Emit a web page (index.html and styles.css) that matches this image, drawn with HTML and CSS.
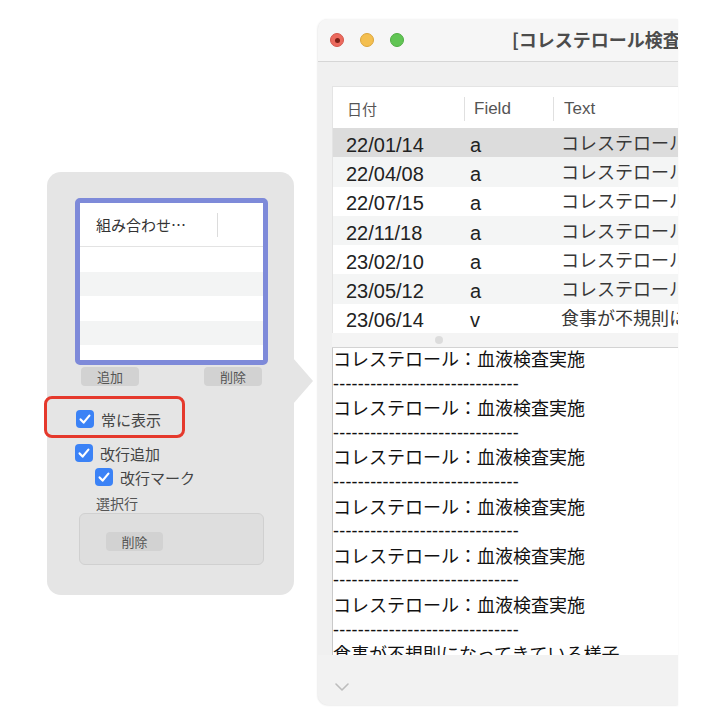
FILE: index.html
```html
<!DOCTYPE html>
<html lang="ja">
<head>
<meta charset="utf-8">
<title>Window</title>
<link rel="stylesheet" href="styles.css">
</head>
<body>
<div class="stage">
  <div class="popover">
    <div class="list">
      <div class="list-head"><span class="list-col">組み合わせ…</span><span class="list-sep"></span></div>
      <div class="list-row"></div>
      <div class="list-row alt"></div>
      <div class="list-row"></div>
      <div class="list-row alt"></div>
      <div class="list-row"></div>
    </div>
    <div class="btn-row"><span class="btn">追加</span><span class="btn">削除</span></div>
    <div class="check check-1"><span class="box"><svg viewBox="0 0 18 18" width="18" height="18"><path d="M4.6 9.4 L7.6 12.6 L13.4 5.6" fill="none" stroke="#fff" stroke-width="2.2" stroke-linecap="round" stroke-linejoin="round"/></svg></span><span>常に表示</span></div>
    <div class="check check-2"><span class="box"><svg viewBox="0 0 18 18" width="18" height="18"><path d="M4.6 9.4 L7.6 12.6 L13.4 5.6" fill="none" stroke="#fff" stroke-width="2.2" stroke-linecap="round" stroke-linejoin="round"/></svg></span><span>改行追加</span></div>
    <div class="check check-3"><span class="box"><svg viewBox="0 0 18 18" width="18" height="18"><path d="M4.6 9.4 L7.6 12.6 L13.4 5.6" fill="none" stroke="#fff" stroke-width="2.2" stroke-linecap="round" stroke-linejoin="round"/></svg></span><span>改行マーク</span></div>
    <div class="caption">選択行</div>
    <div class="group"><span class="btn">削除</span></div>
    <div class="highlight"></div>
  </div>

  <div class="window">
    <div class="titlebar">
      <div class="lights">
        <span class="light red"><span class="dot"></span></span>
        <span class="light yellow"></span>
        <span class="light green"></span>
      </div>
      <div class="title">[コレステロール検査結果]</div>
    </div>
    <div class="content">
      <div class="table">
        <div class="thead">
          <div class="th c1">日付</div>
          <div class="th c2">Field</div>
          <div class="th c3">Text</div>
        </div>
        <div class="tr selected"><div class="td c1">22/01/14</div><div class="td c2">a</div><div class="td c3 jp">コレステロール：血液検査実施</div></div>
        <div class="tr alt"><div class="td c1">22/04/08</div><div class="td c2">a</div><div class="td c3 jp">コレステロール：血液検査実施</div></div>
        <div class="tr"><div class="td c1">22/07/15</div><div class="td c2">a</div><div class="td c3 jp">コレステロール：血液検査実施</div></div>
        <div class="tr alt"><div class="td c1">22/11/18</div><div class="td c2">a</div><div class="td c3 jp">コレステロール：血液検査実施</div></div>
        <div class="tr"><div class="td c1">23/02/10</div><div class="td c2">a</div><div class="td c3 jp">コレステロール：血液検査実施</div></div>
        <div class="tr alt"><div class="td c1">23/05/12</div><div class="td c2">a</div><div class="td c3 jp">コレステロール：血液検査実施</div></div>
        <div class="tr"><div class="td c1">23/06/14</div><div class="td c2">v</div><div class="td c3 jp">食事が不規則になってきている様子</div></div>
      </div>
      <div class="splitter"><span class="grip"></span></div>
      <div class="textview">
        <div class="lines">
          <div class="line">コレステロール：血液検査実施</div>
          <div class="line dash">------------------------------</div>
          <div class="line">コレステロール：血液検査実施</div>
          <div class="line dash">------------------------------</div>
          <div class="line">コレステロール：血液検査実施</div>
          <div class="line dash">------------------------------</div>
          <div class="line">コレステロール：血液検査実施</div>
          <div class="line dash">------------------------------</div>
          <div class="line">コレステロール：血液検査実施</div>
          <div class="line dash">------------------------------</div>
          <div class="line">コレステロール：血液検査実施</div>
          <div class="line dash">------------------------------</div>
          <div class="line">食事が不規則になってきている様子</div>
        </div>
      </div>
    </div>
    <div class="bottombar">
      <svg class="chevron" viewBox="0 0 14 8" width="14" height="8"><polyline points="1,1 7,7 13,1" fill="none" stroke="#bdbdbd" stroke-width="1.6" stroke-linecap="round" stroke-linejoin="round"/></svg>
    </div>
  </div>
</div>
</body>
</html>
```

FILE: styles.css
```css
* { box-sizing: border-box; }

html, body {
  margin: 0;
  padding: 0;
  background: #ffffff;
}

body {
  font-family: "Liberation Sans", "Noto Sans CJK JP", sans-serif;
  color: #222;
}

.stage {
  display: flex;
  align-items: flex-start;
  gap: 24px;
  padding: 19px 0 0 47px;
  width: 712px;
  height: 728px;
  overflow: hidden;
}

/* ---------- popover ---------- */
.popover {
  position: relative;
  flex: none;
  width: 247px;
  height: 423px;
  margin-top: 153px;
  padding: 26px 0 0 28px;
  background: #e5e5e5;
  border-radius: 14px;
  font-family: "Noto Sans CJK JP", sans-serif;
  color: #444;
}

.popover::after {
  content: "";
  position: absolute;
  right: -19px;
  top: 186px;
  width: 20px;
  height: 46px;
  background: #e5e5e5;
  clip-path: polygon(0 0, 100% 50%, 0 100%);
}

.list {
  width: 193px;
  height: 167px;
  border: 5px solid #7e8ad9;
  border-radius: 5px;
  background: #fff;
  overflow: hidden;
}

.list-head {
  display: flex;
  align-items: center;
  height: 44px;
  border-bottom: 1px solid #e3e3e3;
  padding-left: 16px;
}

.list-col {
  width: 121px;
  font-size: 15px;
  line-height: 24px;
  color: #333;
  white-space: nowrap;
}

.list-sep {
  width: 1px;
  height: 24px;
  background: #dcdcdc;
}

.list-row {
  height: 24.5px;
  background: #fff;
}

.list-row.alt { background: #f3f4f4; }

.btn-row {
  display: flex;
  justify-content: space-between;
  width: 193px;
  margin-top: 2px;
  padding: 0 6px;
}

.btn {
  display: inline-flex;
  align-items: center;
  justify-content: center;
  width: 58px;
  height: 19px;
  background: #d2d2d2;
  border-radius: 4px;
  font-size: 13px;
  color: #555;
  line-height: 1;
}

.check {
  display: flex;
  align-items: center;
  gap: 7px;
  height: 18px;
  font-size: 15px;
  color: #444;
  white-space: nowrap;
}

.check-1 { margin-top: 24px; padding-left: 1px; }
.check-2 { margin-top: 16px; }
.check-3 { margin-top: 6px; padding-left: 20px; }

.box {
  display: inline-flex;
  width: 18px;
  height: 18px;
  background: #3b82f6;
  border-radius: 4px;
  flex: none;
}

.caption {
  margin-top: 8px;
  padding-left: 21px;
  font-size: 14px;
  line-height: 18px;
  color: #555;
}

.group {
  width: 185px;
  height: 52px;
  margin: 1px 0 0 4px;
  padding: 14px 0 0 26px;
  background: #dedede;
  border: 1px solid #d0d0d0;
  border-radius: 6px;
}

.group .btn { width: 57px; }

.highlight {
  position: absolute;
  left: -3px;
  top: 224px;
  width: 141px;
  height: 42px;
  border: 3px solid #e5392c;
  border-radius: 8px;
}

/* ---------- window ---------- */
.window {
  flex: none;
  width: 360px;
  height: 686px;
  display: flex;
  flex-direction: column;
  background: #f0f0f0;
  border-radius: 10px 0 0 10px;
  box-shadow: -1px 0 2px rgba(0,0,0,0.06), 0 1px 2px rgba(0,0,0,0.06);
  overflow: hidden;
}

.titlebar {
  flex: none;
  display: flex;
  align-items: center;
  height: 43px;
  background: #f6f6f6;
  border-bottom: 1px solid #d6d6d6;
  padding-left: 12px;
}

.lights {
  display: flex;
  gap: 16px;
}

.light {
  display: flex;
  align-items: center;
  justify-content: center;
  width: 14px;
  height: 14px;
  border-radius: 50%;
}

.light.red { background: #ec6a5e; border: 0.5px solid #d4574c; }
.light.yellow { background: #f4bf4f; border: 0.5px solid #dba53c; }
.light.green { background: #61c554; border: 0.5px solid #50ad44; }

.dot {
  width: 5px;
  height: 5px;
  border-radius: 50%;
  background: #7c1f16;
}

.title {
  margin-left: 108px;
  font-family: "Noto Sans CJK JP", sans-serif;
  font-weight: 700;
  font-size: 18px;
  color: #4c4c4c;
  white-space: nowrap;
  margin-top: -2px;
}

.content {
  flex: none;
  height: 593px;
  padding: 24px 0 0 14px;
  display: flex;
  flex-direction: column;
}

.table {
  width: 420px;
  height: 247px;
  background: #fff;
  border-top: 1px solid #e4e4e4;
  border-left: 1px solid #e4e4e4;
  flex: none;
}

.thead {
  display: flex;
  align-items: center;
  height: 41px;
  padding-top: 2px;
  font-size: 17px;
  color: #555;
}

.th {
  flex: none;
  height: 24px;
  line-height: 24px;
  white-space: nowrap;
}

.th.c1 {
  width: 131px;
  padding-left: 14px;
  font-family: "Noto Sans CJK JP", sans-serif;
  font-size: 15px;
}

.th.c2 {
  width: 89px;
  padding-left: 9px;
  border-left: 1px solid #e0e0e0;
}

.th.c3 {
  padding-left: 10px;
  border-left: 1px solid #e0e0e0;
}

.tr {
  display: flex;
  align-items: center;
  height: 29.3px;
  padding-top: 4px;
  font-size: 20px;
  color: #222;
  white-space: nowrap;
}

.tr.alt { background: #f4f5f5; }
.tr.selected { background: #dcdcdc; }

.td { flex: none; line-height: 24px; }
.td.c1 { width: 131px; padding-left: 13px; }
.td.c2 { width: 90px; padding-left: 6px; }
.td.c3 { padding-left: 7px; }

.jp {
  font-family: "Noto Sans CJK JP", sans-serif;
  font-size: 18px;
  color: #383838;
  margin-top: -6px;
}

.splitter {
  flex: none;
  display: flex;
  justify-content: center;
  height: 15px;
  width: 360px;
  padding: 3px 146px 0 0;
  background: #f4f4f4;
  border-bottom: 1px solid #d3d3d3;
}

.grip {
  width: 8px;
  height: 8px;
  border-radius: 50%;
  background: #dcdcdc;
}

.textview {
  flex: none;
  height: 307px;
  width: 400px;
  background: #fff;
  border-left: 1px solid #c9c9c9;
  overflow: hidden;
}

.lines {
  margin-top: -2px;
  font-family: "Noto Sans CJK JP", sans-serif;
  font-size: 18px;
  line-height: 24.6px;
  color: #111;
  white-space: nowrap;
}

.line { height: 24.6px; }

.line.dash {
  font-family: "Liberation Sans", sans-serif;
  padding-top: 3px;
  line-height: 21.6px;
  letter-spacing: 0.2px;
}

.bottombar {
  flex: none;
  height: 50px;
  background: #f2f2f2;
  padding: 28px 0 0 17px;
}

.chevron { display: block; }
```
